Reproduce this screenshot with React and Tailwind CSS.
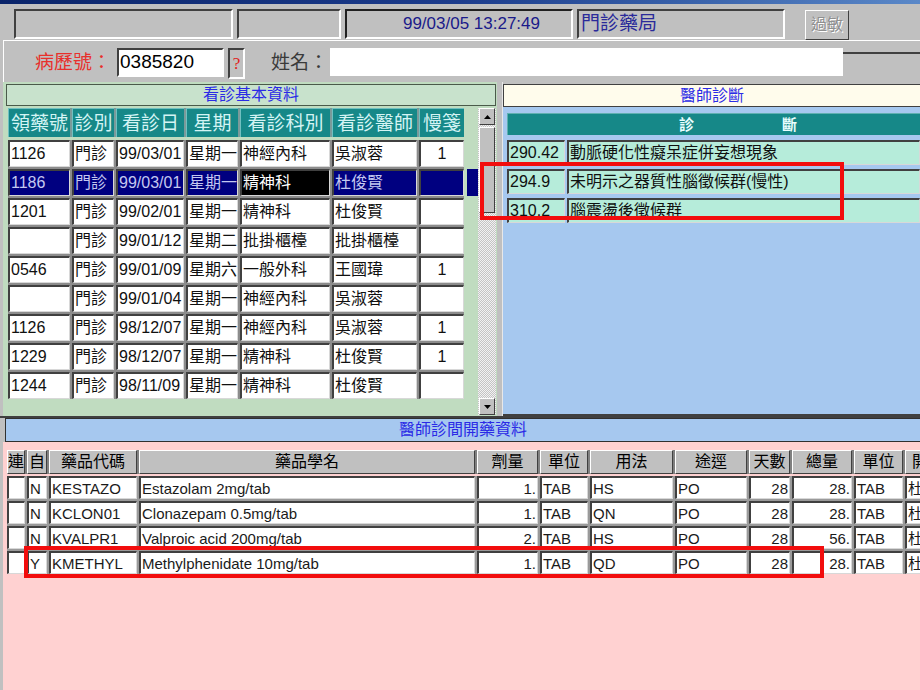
import React from 'react';

const F = "font-['Liberation_Sans','Noto_Sans_CJK_TC',sans-serif]";
const sunken = 'border-2 border-t-[#404040] border-l-[#404040] border-b-white border-r-white';
const raised = 'border border-t-white border-l-white border-b-[#404040] border-r-[#404040] bg-[#c0c0c0]';
const cell = 'border-t-2 border-l-2 border-t-[#404040] border-l-[#404040] border-b border-r border-b-[#d8d8d8] border-r-[#d8d8d8]';

const visitCols = [
  { label: '領藥號', w: 'w-[62px]' },
  { label: '診別', w: 'w-[42px]' },
  { label: '看診日', w: 'w-[68px]' },
  { label: '星期', w: 'w-[52px]' },
  { label: '看診科別', w: 'w-[90px]' },
  { label: '看診醫師', w: 'w-[85px]' },
  { label: '慢箋', w: 'w-[45px]', center: true },
];

const visits = [
  ['1126', '門診', '99/03/01', '星期一', '神經內科', '吳淑蓉', '1'],
  ['1186', '門診', '99/03/01', '星期一', '精神科', '杜俊賢', ''],
  ['1201', '門診', '99/02/01', '星期一', '精神科', '杜俊賢', ''],
  ['', '門診', '99/01/12', '星期二', '批掛櫃檯', '批掛櫃檯', ''],
  ['0546', '門診', '99/01/09', '星期六', '一般外科', '王國瑋', '1'],
  ['', '門診', '99/01/04', '星期一', '神經內科', '吳淑蓉', ''],
  ['1126', '門診', '98/12/07', '星期一', '神經內科', '吳淑蓉', '1'],
  ['1229', '門診', '98/12/07', '星期一', '精神科', '杜俊賢', '1'],
  ['1244', '門診', '98/11/09', '星期一', '精神科', '杜俊賢', ''],
];

const diagnoses = [
  ['290.42', '動脈硬化性癡呆症併妄想現象'],
  ['294.9', '未明示之器質性腦徵候群(慢性)'],
  ['310.2', '腦震盪後徵候群'],
];

// columns of the order table
const medCols = [
  { w: 'w-[18px]', label: '連' },
  { w: 'w-[20px]', label: '自' },
  { w: 'w-[88px]', label: '藥品代碼' },
  { w: 'w-[336px]', label: '藥品學名' },
  { w: 'w-[61px]', label: '劑量', right: true },
  { w: 'w-[48px]', label: '單位' },
  { w: 'w-[83px]', label: '用法' },
  { w: 'w-[72px]', label: '途逕' },
  { w: 'w-[41px]', label: '天數', right: true },
  { w: 'w-[60px]', label: '總量', right: true },
  { w: 'w-[49px]', label: '單位' },
  { w: 'w-[30px]', label: '開' },
];

const meds = [
  ['', 'N', 'KESTAZO', 'Estazolam 2mg/tab', '1.', 'TAB', 'HS', 'PO', '28', '28.', 'TAB', '杜'],
  ['', 'N', 'KCLON01', 'Clonazepam 0.5mg/tab', '1.', 'TAB', 'QN', 'PO', '28', '28.', 'TAB', '杜'],
  ['', 'N', 'KVALPR1', 'Valproic acid 200mg/tab', '2.', 'TAB', 'HS', 'PO', '28', '56.', 'TAB', '杜'],
  ['', 'Y', 'KMETHYL', 'Methylphenidate 10mg/tab', '1.', 'TAB', 'QD', 'PO', '28', '28.', 'TAB', '杜'],
];

function Arrow({ down }) {
  return (
    <svg width="7" height="4" viewBox="0 0 7 4">
      <polygon points={down ? '0,0 7,0 3.5,4' : '0,4 7,4 3.5,0'} fill="#000" />
    </svg>
  );
}

export default function App() {
  return (
    <div className={`${F} relative w-[920px] h-[690px] overflow-hidden bg-[#c0c0c0]`}>
      {/* title bar remnant */}
      <div className="h-[4px] bg-gradient-to-r from-[#0a246a] via-[#1c3c8c] to-[#5a88c8]" />

      {/* status bar */}
      <div className="h-[36px] flex items-start pt-[5px] pl-[14px] gap-[4px]">
        <div className={`${sunken} w-[219px] h-[30px]`} />
        <div className={`${sunken} w-[104px] h-[30px]`} />
        <div className="w-[228px] h-[30px] border-2 border-t-[#202020] border-l-[#202020] border-b-white border-r-white flex items-center justify-end pr-[31px] text-[17px] text-[#1a1a8a]">
          99/03/05 13:27:49
        </div>
        <div className={`${sunken} w-[208px] h-[30px] flex items-center pl-[2px] text-[19px] text-[#2a2a9a]`}>
          門診藥局
        </div>
        <div className={`${raised} ml-[16px] mt-[1px] w-[44px] h-[30px] flex items-center justify-center text-[16px] text-[#909090] [text-shadow:1px_1px_0_#ffffff]`}>
          過敏
        </div>
      </div>

      {/* patient row */}
      <div className="h-[42px] ml-[3px] border-t border-l border-white flex items-start pt-[7px]">
        <span className="ml-[31px] mt-[3px] text-[19px] leading-[24px] text-[#e8302c]">病歷號：</span>
        <div className={`${sunken} ml-[6px] w-[107px] h-[29px] bg-white flex items-center pl-[1px] text-[19px] text-black`}>
          0385820
        </div>
        <div className={`${sunken} ml-[4px] w-[17px] h-[31px] flex items-center justify-center text-[17px] text-[#e02020] font-['Liberation_Serif',serif]`}>
          ?
        </div>
        <span className="ml-[26px] mt-[3px] text-[19px] leading-[24px] text-[#3a3a3a]">姓名：</span>
        <div className="ml-[2px] w-[513px] h-[28px] bg-white" />
        <div className="flex-1 mt-[4px] h-[26px] border-t-2 border-[#404040]" />
      </div>

      {/* middle */}
      <div className="flex h-[334px]">
        {/* visit history */}
        <div className="ml-[3px] w-[494px] bg-[#c0dcc0] pt-[2px]">
          <div className="ml-[3px] w-[490px] h-[22px] bg-[#c8e2cc] border border-[#4a5a4a] flex items-center justify-center text-[16px] text-[#2a2ae6]">
            看診基本資料
          </div>
          <div className="flex mt-[2px]">
            <div className="ml-[5px] w-[470px]">
              <div className="flex gap-[2px] w-[456px] h-[29px] bg-[#7a9a9a]">
                {visitCols.map((c) => (
                  <div
                    key={c.label}
                    className={`${c.w} h-full bg-[#168888] border-t border-l border-t-[#70c0c0] border-l-[#70c0c0] flex items-center justify-center text-[19px] leading-none text-[#d4f4f4]`}
                  >
                    {c.label}
                  </div>
                ))}
              </div>
              <div className="mt-[3px] w-[456px] bg-[#8c8c8c] flex flex-col gap-[2px]">
                {visits.map((r, i) => {
                  const sel = i === 1;
                  return (
                    <div key={i} className="relative flex gap-[2px] h-[27px]">
                      {r.map((v, j) => {
                        const black = sel && j === 4;
                        const bg = black ? 'bg-black text-white' : sel ? 'bg-[#000080] text-[#c4c8f0]' : 'bg-white text-[#101010]';
                        return (
                          <div
                            key={j}
                            className={`${visitCols[j].w} ${cell} ${bg} h-full flex items-center text-[16px] leading-none ${visitCols[j].center ? 'justify-center' : 'pl-[1px]'}`}
                          >
                            {v}
                          </div>
                        );
                      })}
                      {sel && <div className="absolute left-[459px] top-0 w-[11px] h-full bg-[#000080]" />}
                    </div>
                  );
                })}
              </div>
            </div>
            {/* scrollbar */}
            <div className="w-[18px] h-[307px] flex flex-col items-center bg-[repeating-conic-gradient(#c4c4c4_0%_25%,#f2f2f2_0%_50%)] bg-[length:2px_2px]">
              <div className={`${raised} w-[16px] h-[17px] flex items-center justify-center`}>
                <Arrow />
              </div>
              <div className={`${raised} mt-[2px] w-[16px] h-[86px]`} />
              <div className="flex-1" />
              <div className={`${raised} w-[16px] h-[17px] flex items-center justify-center`}>
                <Arrow down />
              </div>
            </div>
          </div>
        </div>

        <div className="w-[6px] bg-[#c0c0c0] border-r border-[#e8e8e8]" />

        {/* diagnosis */}
        <div className="flex-1 flex flex-col pt-[2px]">
          <div className="h-[23px] bg-[#fffcec] border border-[#404040] border-r-0 flex items-center justify-center text-[16px] text-[#2a2ae6]">
            醫師診斷
          </div>
          <div className="flex-1 bg-[#a6c8ef] border-b-2 border-[#404040] pt-[6px] pl-[4px]">
            <div className="h-[22px] bg-[#168888] border-t border-l border-[#60b0b0] flex items-center pl-[171px] gap-[88px] text-[15px] font-bold leading-none text-[#eaffff]">
              <span>診</span>
              <span>斷</span>
            </div>
            <div className="mt-[5px] flex flex-col gap-[4px]">
              {diagnoses.map(([code, name]) => (
                <div key={code} className="flex gap-[2px] h-[25px]">
                  <div className={`${cell} w-[58px] bg-[#b6ecda] flex items-center pl-[1px] text-[16px] leading-none text-[#101010]`}>{code}</div>
                  <div className={`${cell} flex-1 bg-[#b6ecda] flex items-center pl-[1px] text-[16px] leading-none text-[#101010]`}>{name}</div>
                </div>
              ))}
            </div>
          </div>
        </div>
      </div>

      {/* orders */}
      <div className="h-[274px] flex flex-col border-t-2 border-[#404040]">
        <div className="ml-[5px] h-[24px] bg-[#a6c8ef] border border-[#303030] border-r-0 flex items-center justify-center text-[16px] leading-none text-[#2a2ae6]">
          醫師診間開藥資料
        </div>
        <div className="flex-1 ml-[3px] bg-[#ffd1d1] pt-[8px] pl-[4px]">
          <div className="flex gap-[2px] h-[24px] bg-[#808080] w-fit">
            {medCols.map((c, k) => (
              <div key={k} className={`${raised} ${c.w} h-full flex items-center justify-center text-[16px] leading-none text-black`}>
                {c.label}
              </div>
            ))}
          </div>
          <div className="mt-[2px] flex flex-col gap-[2px] bg-[#9a9a9a] w-fit">
            {meds.map((r, i) => (
              <div key={i} className="flex gap-[2px] h-[23px]">
                {r.map((v, j) => (
                  <div
                    key={j}
                    className={`${medCols[j].w} ${cell} bg-white h-full flex items-center text-[15px] leading-none text-[#1a1a1a] ${medCols[j].right ? 'justify-end pr-[1px]' : 'pl-[1px]'}`}
                  >
                    {v}
                  </div>
                ))}
              </div>
            ))}
          </div>
        </div>
      </div>

      {/* annotation boxes */}
      <div className="absolute left-[480px] top-[162px] w-[364px] h-[58px] border-[4px] border-[#f20d0d]" />
      <div className="absolute left-[24px] top-[546px] w-[800px] h-[32px] border-[4px] border-[#f20d0d]" />
    </div>
  );
}
